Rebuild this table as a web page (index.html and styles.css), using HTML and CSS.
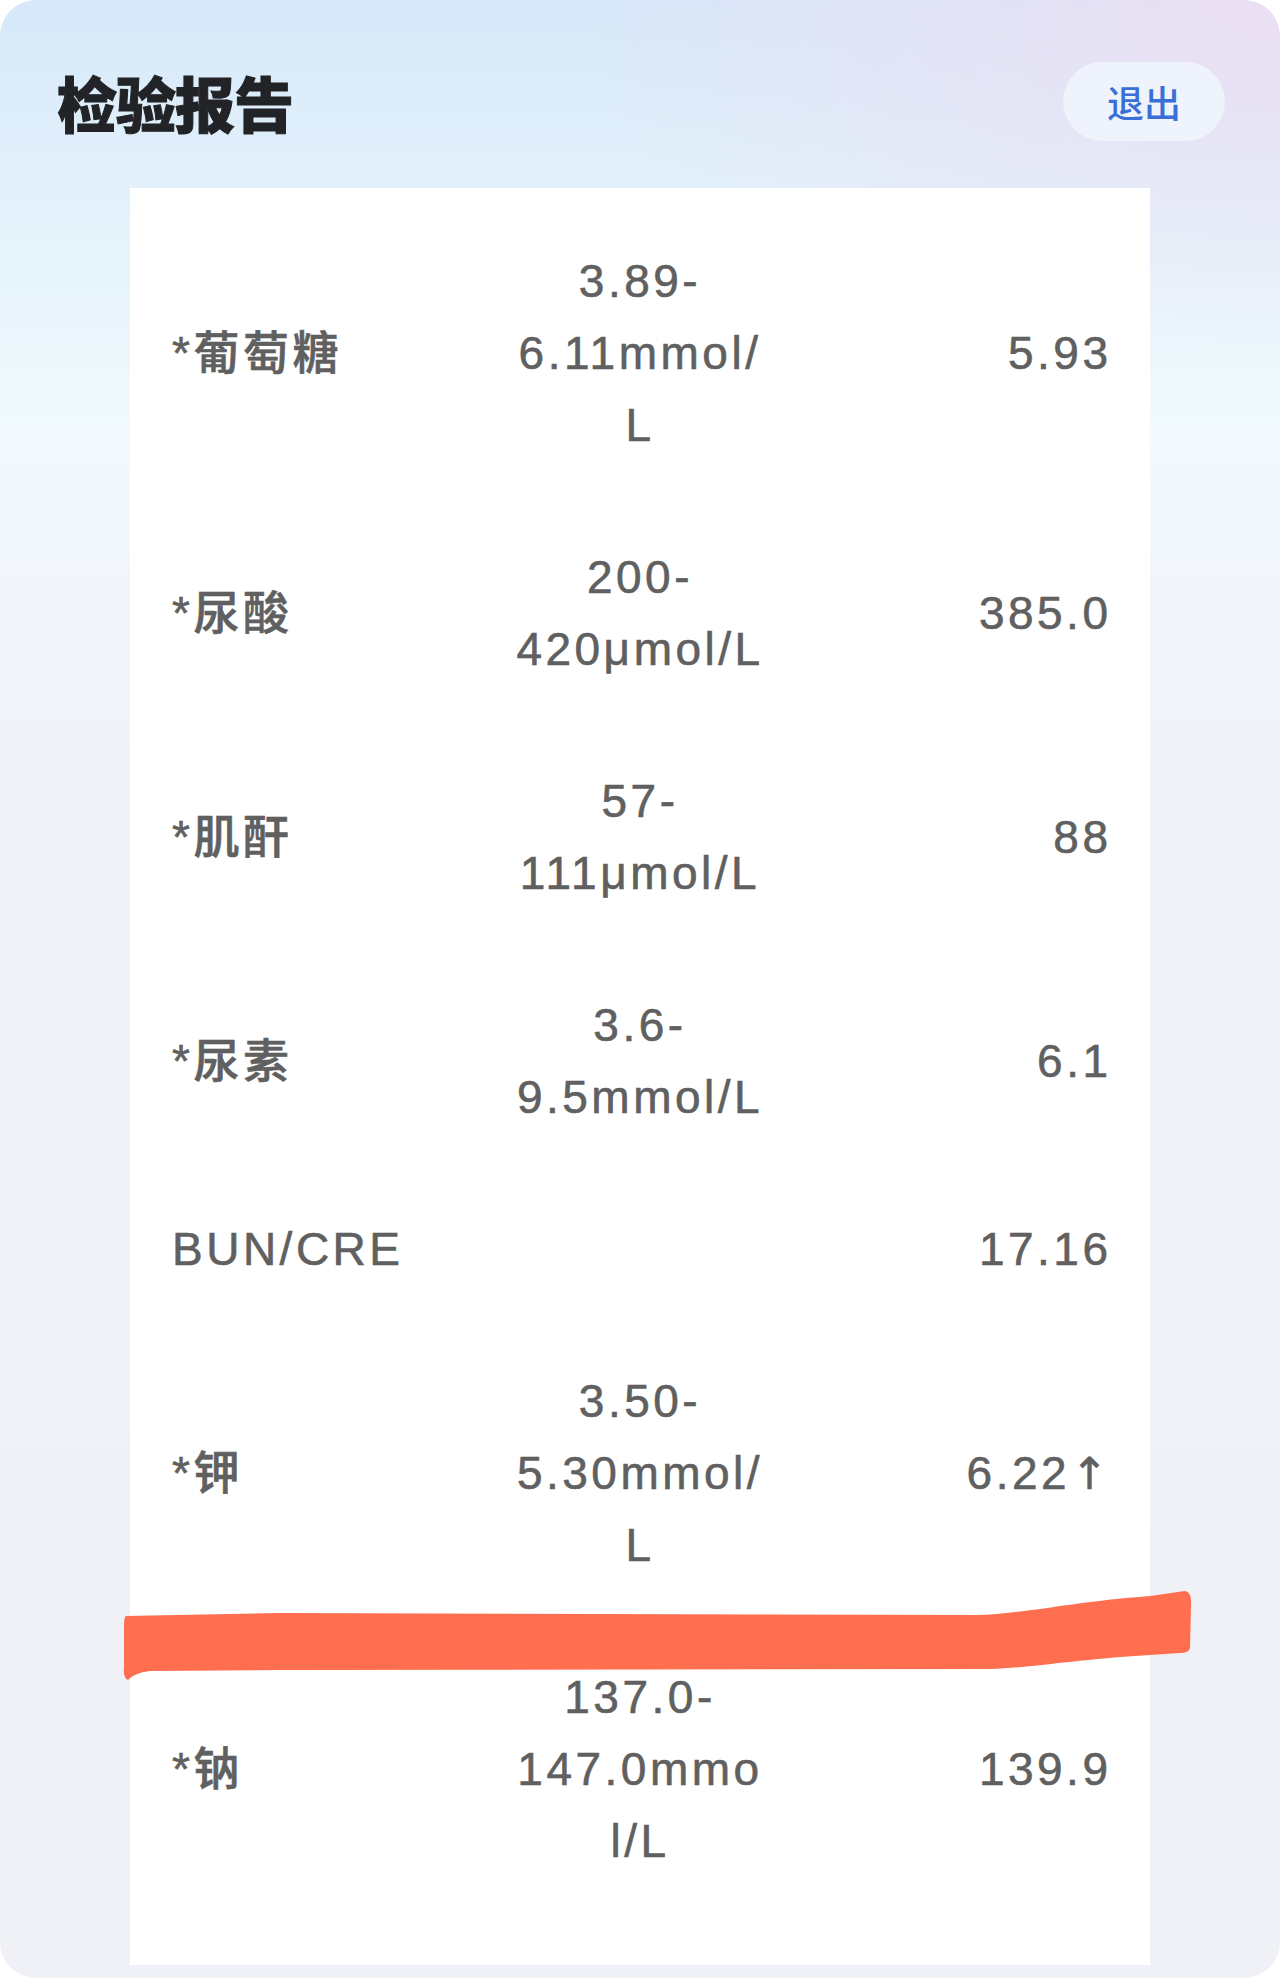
FILE: index.html
```html
<!DOCTYPE html>
<html lang="zh-CN">
<head>
<meta charset="utf-8">
<title>检验报告</title>
<link rel="stylesheet" href="styles.css">
</head>
<body>
<div class="panel">
  <header class="header">
    <h1 class="title">检验报告</h1>
    <button class="exit">退出</button>
  </header>
  <section class="card">
    <div class="row"><div class="name">*葡萄糖</div><div class="range">3.89-6.11mmol/L</div><div class="val">5.93</div></div>
    <div class="row"><div class="name">*尿酸</div><div class="range">200-420μmol/L</div><div class="val">385.0</div></div>
    <div class="row"><div class="name">*肌酐</div><div class="range">57-111μmol/L</div><div class="val">88</div></div>
    <div class="row"><div class="name">*尿素</div><div class="range">3.6-9.5mmol/L</div><div class="val">6.1</div></div>
    <div class="row"><div class="name">BUN/CRE</div><div class="range"></div><div class="val">17.16</div></div>
    <div class="row"><div class="name">*钾</div><div class="range">3.50-5.30mmol/L</div><div class="val">6.22<span class="up">↑</span></div></div>
    <div class="row"><div class="name">*钠</div><div class="range">137.0-147.0mmol/L</div><div class="val">139.9</div></div>
  </section>
  <svg class="marker" width="1090" height="110" viewBox="0 0 1090 110" aria-hidden="true">
    <path d="M 16 36 L 170 33 L 870 35 C 920 33 960 22 1040 16 L 1075 11 Q 1082 12 1081 25 L 1080 68 Q 1079 73 1070 73 L 1040 75 C 960 80 920 88 880 89 L 170 90 L 40 91 Q 24 93 18 100 Q 13 98 14 88 L 14 45 Q 14 37 16 36 Z" fill="#ff6e4f"/>
  </svg>
</div>
</body>
</html>
```
FILE: styles.css
```css
html, body {
  margin: 0;
  padding: 0;
  background: #ffffff;
}
body {
  font-family: "Liberation Sans", "Noto Sans CJK SC", sans-serif;
}
.panel {
  position: relative;
  box-sizing: border-box;
  height: 1978px;
  border-radius: 36px;
  padding: 62px 55px 0 55px;
  background:
    radial-gradient(ellipse 700px 360px at 100% 0%, rgba(236, 222, 242, 0.95), rgba(236, 222, 242, 0) 100%),
    linear-gradient(180deg, #d6e8f9 0px, #e6f3fb 250px, #f1fafe 430px, #f2f5f9 620px, #f0f2f7 800px, #f0f1f6 100%);
}
.header {
  display: flex;
  align-items: center;
  justify-content: space-between;
  height: 79px;
}
.title {
  margin: 0 0 0 2px;
  font-family: "Noto Sans CJK SC", sans-serif;
  font-size: 60px;
  font-weight: 900;
  color: #222326;
  letter-spacing: -1px;
  line-height: 1;
  -webkit-text-stroke: 1px #222326;
}
.exit {
  width: 162px;
  height: 79px;
  border: none;
  border-radius: 40px;
  background: #eef3fc;
  color: #3a6fd8;
  font-family: "Noto Sans CJK SC", sans-serif;
  font-size: 37px;
  font-weight: 500;
  padding: 0;
}
.card {
  margin: 47px 75px 0 75px;
  background: #ffffff;
  padding: 17px 42px 48px 42px;
}
.row {
  display: grid;
  grid-template-columns: 1fr 250px 1fr;
  align-items: center;
  padding: 40px 0;
  font-size: 46px;
  font-weight: 500;
  line-height: 72px;
  letter-spacing: 3.5px;
  color: #606060;
  -webkit-text-stroke: 0.6px #606060;
}
.name {
  text-align: left;
}
.range {
  text-align: center;
  word-break: normal;
  overflow-wrap: anywhere;
}
.val {
  text-align: right;
  margin-right: -3.5px;
}
.up {
  font-family: "DejaVu Sans", sans-serif;
  font-size: 44px;
  letter-spacing: 0;
  margin-left: 1px;
  margin-right: 3.5px;
}
.marker {
  position: absolute;
  left: 110px;
  top: 1580px;
}
```
